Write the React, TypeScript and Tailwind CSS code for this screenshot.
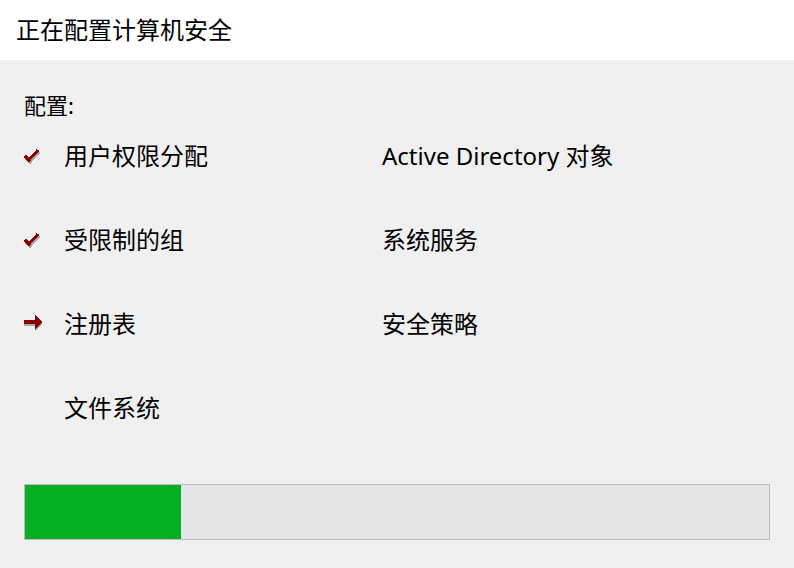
import React from 'react';

const font = { fontFamily: '"Noto Sans", "Noto Sans CJK SC", sans-serif' };

function Check() {
    return (
        <svg width="18" height="18" viewBox="0 0 18 18" shapeRendering="crispEdges">
            {/* shadow */}
            <path d="M1 9 L5 13 L14 3" fill="none" stroke="#a8a8a8" strokeWidth="3" transform="translate(1 2)" />
            <path d="M1 9 L5 13 L14 3" fill="none" stroke="#8b0000" strokeWidth="3" />
        </svg>
    );
}

function Arrow() {
    return (
        <svg width="20" height="20" viewBox="0 0 20 20" shapeRendering="crispEdges">
            <path d="M0 6 H11 V1 L19 8 L11 15 V10 H0 Z" fill="#a8a8a8" transform="translate(0 2)" />
            <path d="M0 6 H11 V1 L19 8 L11 15 V10 H0 Z" fill="#8b0000" />
        </svg>
    );
}

const rows: { left: string; right?: string; state: 'done' | 'current' | 'none' }[] = [
    { left: '用户权限分配', right: 'Active Directory 对象', state: 'done' },
    { left: '受限制的组', right: '系统服务', state: 'done' },
    { left: '注册表', right: '安全策略', state: 'current' },
    { left: '文件系统', state: 'none' },
];

export default function App() {
    return (
        <div className="w-[794px] h-[568px] flex flex-col text-black" style={font}>
            <div className="h-[60px] bg-white flex items-center pl-4 text-[24px]">正在配置计算机安全</div>

            <div className="flex-1 bg-[#f0f0f0] px-6 pt-[27px] flex flex-col">
                <div className="text-[22px] leading-[36px]">配置:</div>

                <div className="flex flex-col mt-[15px]">
                    {rows.map((r, i) => (
                        <div key={i} className="h-[84px] flex items-start">
                            <div className="w-[40px] h-[36px] flex items-center">
                                {r.state === 'done' && <Check />}
                                {r.state === 'current' && <Arrow />}
                            </div>
                            <div className="w-[318px] text-[24px] leading-[36px]">{r.left}</div>
                            <div className="text-[24px] leading-[36px]">{r.right}</div>
                        </div>
                    ))}
                </div>

                <div className="mt-[10px] h-[56px] w-[746px] border border-[#bcbcbc] bg-[#e6e6e6]">
                    <div className="h-full w-[156px] bg-[#06b025]"></div>
                </div>
            </div>
        </div>
    );
}
